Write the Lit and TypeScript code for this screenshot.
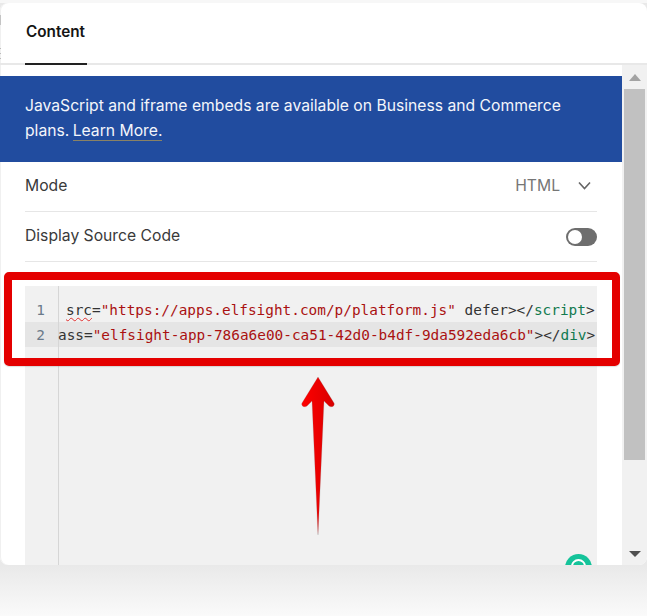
import { LitElement, html, css } from "lit";
import { customElement } from "lit/decorators.js";

@customElement("app-root")
export class AppRoot extends LitElement {
  static styles = css`
    :host { display: block; width: 647px; height: 616px; overflow: hidden; position: relative;
      background: linear-gradient(#e9e9e9 565px, #fafafa 616px);
      font-family: Inter, "Noto Sans", sans-serif; }
    .top { height: 3px; background: #f7f7f7; }
    .card { height: 562px; background: #fff; border-radius: 8px; overflow: hidden; display: flex; flex-direction: column; position: relative; box-shadow: inset 1px 0 #f0f0f0; }
    .card::before { content: ""; position: absolute; left: 0; top: 12px; width: 1px; height: 10px; background: #c4c4c4; }
    .card::after { content: ""; position: absolute; left: 0; top: 45px; width: 1px; height: 12px; background: repeating-linear-gradient(#bbb 0 1px, transparent 1px 5px); }
    .tabs { height: 60px; flex: none; border-bottom: 2px solid #e8e8e8; padding-left: 25px; display: flex; }
    .tab { width: 62px; height: 60px; border-bottom: 2px solid #222; margin-bottom: -2px; font-size: 15.3px; font-weight: 600; color: #151515; line-height: 57px; text-indent: 1px; }
    .body { flex: 1; display: flex; min-height: 0; }
    .main { width: 622px; flex: none; padding-top: 11px; display: flex; flex-direction: column; min-height: 0; }
    .banner { background: #214c9f; color: #f4f6fb; height: 86px; flex: none; box-sizing: border-box; padding: 17px 25px 0; font-size: 15.7px; line-height: 25px; }
    .banner a { color: inherit; text-decoration: none; border-bottom: 1px solid #8a8264; margin-left: -1px; }
    .row { margin: 0 25px; height: 47px; padding-bottom: 2px; flex: none; border-bottom: 1px solid #e6e6e6; display: flex; align-items: center; justify-content: space-between; font-size: 15.7px; color: #3a3a3a; }
    .val { color: #767676; display: flex; align-items: center; gap: 18px; margin-right: 6px; }
    .tog { width: 31px; height: 18px; border-radius: 9px; background: #6e6e6e; position: relative; margin-top: 2px; }
    .tog::after { content: ""; position: absolute; left: 2px; top: 2px; width: 14px; height: 14px; border-radius: 50%; background: #fff; }
    .editor { margin: 24px 25px 0; flex: 1; min-height: 0; background: #f1f1f1; padding-top: 11px; position: relative; overflow: hidden; font: 14.4px/26px "DejaVu Sans Mono", monospace; }
    .editor::before { content: ""; position: absolute; left: 33px; top: 0; bottom: 0; width: 1px; background: #d6d6d6; }
    .line { height: 25px; display: flex; white-space: pre; color: #333; }
    .line.active { background: #e5e5e5; }
    .num { width: 20px; flex: none; text-align: right; color: #6b7a8a; margin-right: 13px; }
    .code { position: relative; }
    .l1 .code { padding-left: 8px; }
    .s { color: #a11; } .t { color: #117a4f; }
    .sp { text-decoration: underline wavy #e03030 1px; text-underline-offset: 2px; }
    .bar { width: 25px; flex: none; background: #f1f1f1; display: flex; flex-direction: column; align-items: center; }
    .up { width: 0; height: 0; border: 6px solid transparent; border-top: 0; border-bottom: 7px solid #a3a3a3; margin: 9px 0 8px; }
    .thumb { width: 21px; height: 371px; background: #c1c1c1; flex: none; }
    .dn { width: 0; height: 0; border: 6px solid transparent; border-bottom: 0; border-top: 6px solid #505050; margin-top: 91px; }
    .g { position: absolute; left: 565px; top: 551px; width: 27px; height: 27px; border-radius: 50%; background: #15c39a; }
    .g::after { content: ""; position: absolute; left: 6px; top: 5px; width: 15px; height: 15px; box-sizing: border-box; border: 2px solid #fff; border-radius: 50%; }
    .box { position: absolute; left: 4px; top: 272px; width: 616px; height: 94px; box-sizing: border-box; border: 8px solid #e40000; border-radius: 5px; box-shadow: 0 1px 1px #8884; }
    .arrow { position: absolute; left: 300px; top: 375px; }
  `;
  render() {
    return html`
      <div class="top"></div>
      <div class="card">
        <div class="tabs"><div class="tab">Content</div></div>
        <div class="body">
          <div class="main">
            <div class="banner">JavaScript and iframe embeds are available on Business and Commerce plans. <a>Learn More.</a></div>
            <div class="row"><span>Mode</span><span class="val">HTML
              <svg width="13" height="9" viewBox="0 0 13 9"><path d="M1 1.500l5.500 6 5.500-6" fill="none" stroke="#666" stroke-width="1.6"/></svg></span></div>
            <div class="row"><span>Display Source Code</span><span class="tog"></span></div>
            <div class="editor">
              <div class="line l1"><span class="num">1</span><span class="code"><span class="sp">src</span>=<span class="s">"https://apps.elfsight.com/p/platform.js"</span> defer&gt;&lt;/<span class="t">script</span>&gt;</span></div>
              <div class="line active"><span class="num">2</span><span class="code">ass=<span class="s">"elfsight-app-786a6e00-ca51-42d0-b4df-9da592eda6cb"</span>&gt;&lt;/<span class="t">div</span>&gt;</span></div>
            </div>
          </div>
          <div class="bar"><div class="up"></div><div class="thumb"></div><div class="dn"></div></div>
        </div>
        <div class="g"></div>
      </div>
      <div class="box"></div>
      <svg class="arrow" width="36" height="162" viewBox="0 0 36 162">
        <defs><linearGradient id="a" x1="0" x2="1" y1="0" y2="0"><stop offset="0" stop-color="#ff0000"/><stop offset="1" stop-color="#d80000"/></linearGradient></defs>
        <path d="M18 2L34 28c1.500 3-3 5-5 3L24 26L18 160L12 26L7 31c-2 2-6.500 0-5-3Z" fill="url(#a)" stroke="#7776" stroke-width=".5"/>
      </svg>
    `;
  }
}
